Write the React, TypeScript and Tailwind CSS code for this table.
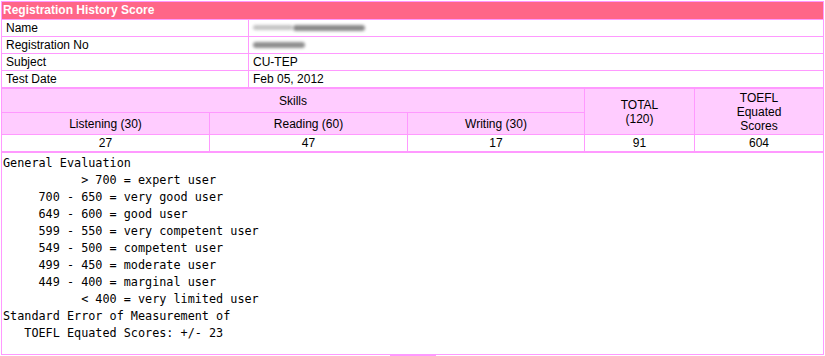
export default function App() {
  const evalText = `General Evaluation
           > 700 = expert user
     700 - 650 = very good user
     649 - 600 = good user
     599 - 550 = very competent user
     549 - 500 = competent user
     499 - 450 = moderate user
     449 - 400 = marginal user
           < 400 = very limited user
Standard Error of Measurement of
   TOEFL Equated Scores: +/- 23`;

  return (
    <div className="w-[825px] h-[356px] bg-white pt-px pl-px font-['Liberation_Sans',Arial,sans-serif] text-[12px] text-black overflow-hidden">
      <div className="w-[823px]">
        {/* Table 1 */}
        <div className="border border-[#ff99ff]">
          <div className="h-[17px] bg-[#ff6688] text-white font-bold leading-[17px] pl-px">
            Registration History Score
          </div>
          <div className="flex h-[17px] border-t border-[#ff99ff]">
            <div className="w-[247px] border-r border-[#ff99ff] pl-1 leading-4">Name</div>
            <div className="flex-1 pl-1 flex items-center">
              <span className="inline-block w-[40px] h-[5px] bg-[#c4c4c4] blur-[1.5px] rounded-full mt-[-2px]" />
              <span className="inline-block w-[72px] h-[6px] bg-[#8a8a8a] blur-[1.5px] rounded-full mt-[-1px]" />
            </div>
          </div>
          <div className="flex h-[17px] border-t border-[#ff99ff]">
            <div className="w-[247px] border-r border-[#ff99ff] pl-1 leading-4">Registration No</div>
            <div className="flex-1 pl-1 flex items-center">
              <span className="inline-block w-[52px] h-[6px] bg-[#8f8f8f] blur-[1.5px] rounded-full mt-[-1px]" />
            </div>
          </div>
          <div className="flex h-[17px] border-t border-[#ff99ff]">
            <div className="w-[247px] border-r border-[#ff99ff] pl-1 leading-4">Subject</div>
            <div className="flex-1 pl-1 leading-4">CU-TEP</div>
          </div>
          <div className="flex h-[17px] border-t border-[#ff99ff]">
            <div className="w-[247px] border-r border-[#ff99ff] pl-1 leading-4">Test Date</div>
            <div className="flex-1 pl-1 leading-4">Feb 05, 2012</div>
          </div>
        </div>

        {/* Table 2 */}
        <div className="border border-[#ff99ff] grid grid-cols-[208px_198px_177px_110px_128px] grid-rows-[24px_22px_16px] text-center">
          <div className="col-span-3 bg-[#ffccff] border-r border-b border-[#ff99ff] flex items-center justify-center">
            Skills
          </div>
          <div className="row-span-2 bg-[#ffccff] border-r border-b border-[#ff99ff] flex items-center justify-center leading-[14px]">
            TOTAL
            <br />
            (120)
          </div>
          <div className="row-span-2 bg-[#ffccff] border-b border-[#ff99ff] flex items-center justify-center leading-[14px]">
            TOEFL
            <br />
            Equated
            <br />
            Scores
          </div>
          <div className="bg-[#ffccff] border-r border-b border-[#ff99ff] flex items-center justify-center">Listening (30)</div>
          <div className="bg-[#ffccff] border-r border-b border-[#ff99ff] flex items-center justify-center">Reading (60)</div>
          <div className="bg-[#ffccff] border-r border-b border-[#ff99ff] flex items-center justify-center">Writing (30)</div>
          <div className="border-r border-[#ff99ff] leading-4">27</div>
          <div className="border-r border-[#ff99ff] leading-4">47</div>
          <div className="border-r border-[#ff99ff] leading-4">17</div>
          <div className="border-r border-[#ff99ff] leading-4">91</div>
          <div className="leading-4">604</div>
        </div>

        {/* Evaluation */}
        <div className="h-[203px] border border-[#ff99ff]">
          <pre className="m-0 pl-px pt-[2px] font-['DejaVu_Sans_Mono',monospace] text-[11.8px] leading-[17px]">{evalText}</pre>
        </div>
      </div>
      <div className="ml-[389px] w-[46px] h-px bg-[#ff99ff]" />
    </div>
  );
}
